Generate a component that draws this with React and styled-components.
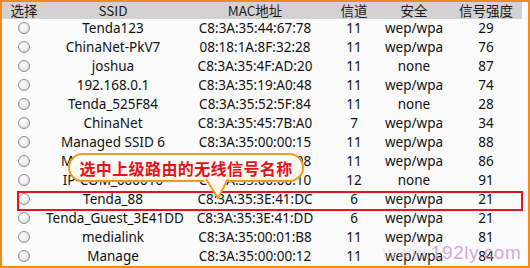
import React from "react";
import styled, { createGlobalStyle } from "styled-components";

const Global = createGlobalStyle`
  html, body { margin: 0; padding: 0; background: #fff; }
  * { box-sizing: border-box; }
`;

const Frame = styled.div`
  position: relative;
  width: 530px;
  height: 268px;
  border: 2px solid #f08a1c;
  background: #fbfbfb;
  font-family: "Noto Sans", "Noto Sans CJK SC", sans-serif;
  font-size: 13.5px;
  color: #111;
  overflow: hidden;
`;

const cols = "44px 134px 150px 48px 72px 72px";

const Header = styled.div`
  display: grid;
  grid-template-columns: ${cols};
  height: 17px;
  background: #d2d2d2;
  width: 520px;
  align-items: center;
`;

const HeadCell = styled.div`
  text-align: center;
  font-family: "Noto Sans CJK SC", sans-serif;
  font-size: 13.5px;
  line-height: 17px;
  color: #1a1a1a;
`;

const Row = styled.div`
  position: relative;
  display: grid;
  grid-template-columns: ${cols};
  height: 19px;
  width: 520px;
  align-items: center;
`;

const Cell = styled.div`
  text-align: center;
  line-height: 19px;
  white-space: nowrap;
`;

const Radio = styled.span`
  display: inline-block;
  width: 12px;
  height: 12px;
  border-radius: 50%;
  border: 1px solid #8e8e8e;
  background: radial-gradient(circle at 40% 35%, #ffffff 0%, #f0f0f0 45%, #cfcfcf 100%);
  vertical-align: middle;
  margin-top: -2px;
`;

const Highlight = styled.div`
  position: absolute;
  left: 15px;
  top: 1px;
  width: 506px;
  height: 20px;
  border: 2px solid #e8141c;
  pointer-events: none;
`;

const Callout = styled.div`
  position: absolute;
  left: 66px;
  top: 151px;
  width: 236px;
  height: 29px;
  border: 2px solid #f39a1e;
  border-radius: 15px;
  background: linear-gradient(#ffffff, #fff8e8);
  display: flex;
  align-items: center;
  justify-content: center;
  font-family: "Noto Sans CJK SC", sans-serif;
  font-weight: 700;
  font-size: 16px;
  color: #e8101c;
  letter-spacing: 0.4px;
`;

const Tail = styled.svg`
  position: absolute;
  left: 198px;
  top: 176px;
  width: 34px;
  height: 22px;
  overflow: visible;
`;

const Watermark = styled.div`
  position: absolute;
  left: 381px;
  top: 240px;
  font-family: "Liberation Sans", Arial, sans-serif;
  font-size: 19px;
  letter-spacing: 0.6px;
  color: rgba(200, 140, 210, 0.75);
  pointer-events: none;
`;

const Faint = styled.span`
  color: rgba(220, 190, 228, 0.45);
`;

const rows = [
  ["Tenda123", "C8:3A:35:44:67:78", "11", "wep/wpa", "29"],
  ["ChinaNet-PkV7", "08:18:1A:8F:32:28", "11", "wep/wpa", "76"],
  ["joshua", "C8:3A:35:4F:AD:20", "11", "none", "87"],
  ["192.168.0.1", "C8:3A:35:19:A0:48", "11", "wep/wpa", "74"],
  ["Tenda_525F84", "C8:3A:35:52:5F:84", "11", "none", "28"],
  ["ChinaNet", "C8:3A:35:45:7B:A0", "7", "wep/wpa", "34"],
  ["Managed SSID 6", "C8:3A:35:00:00:15", "11", "wep/wpa", "88"],
  ["Managed SSID 8", "C8:3A:35:00:00:08", "11", "wep/wpa", "86"],
  ["IP-COM_000010", "C8:3A:35:00:00:10", "12", "none", "91"],
  ["Tenda_88", "C8:3A:35:3E:41:DC", "6", "wep/wpa", "21"],
  ["Tenda_Guest_3E41DD", "C8:3A:35:3E:41:DD", "6", "wep/wpa", "21"],
  ["medialink", "C8:3A:35:00:01:B8", "11", "wep/wpa", "81"],
  ["Manage", "C8:3A:35:00:00:12", "11", "wep/wpa", "84"],
];

export default function App() {
  return (
    <>
      <Global />
      <Frame>
        <Header>
          <HeadCell>选择</HeadCell>
          <HeadCell>SSID</HeadCell>
          <HeadCell>MAC地址</HeadCell>
          <HeadCell>信道</HeadCell>
          <HeadCell>安全</HeadCell>
          <HeadCell>信号强度</HeadCell>
        </Header>
        {rows.map((r, i) => (
          <Row key={i}>
            <Cell>
              <Radio />
            </Cell>
            {r.map((v, j) => (
              <Cell key={j}>{v}</Cell>
            ))}
            {i === 9 && <Highlight />}
          </Row>
        ))}
        <Callout>选中上级路由的无线信号名称</Callout>
        <Tail viewBox="0 0 34 22">
          <path d="M2 0 L18 20 L28 0" fill="#fffbf2" stroke="none" />
          <path d="M6 1 L18 20 L28 1" fill="none" stroke="#f39a1e" strokeWidth="2" strokeLinejoin="miter" />
        </Tail>
        <Watermark>
          <Faint>www.</Faint>192ly.com
        </Watermark>
      </Frame>
    </>
  );
}
